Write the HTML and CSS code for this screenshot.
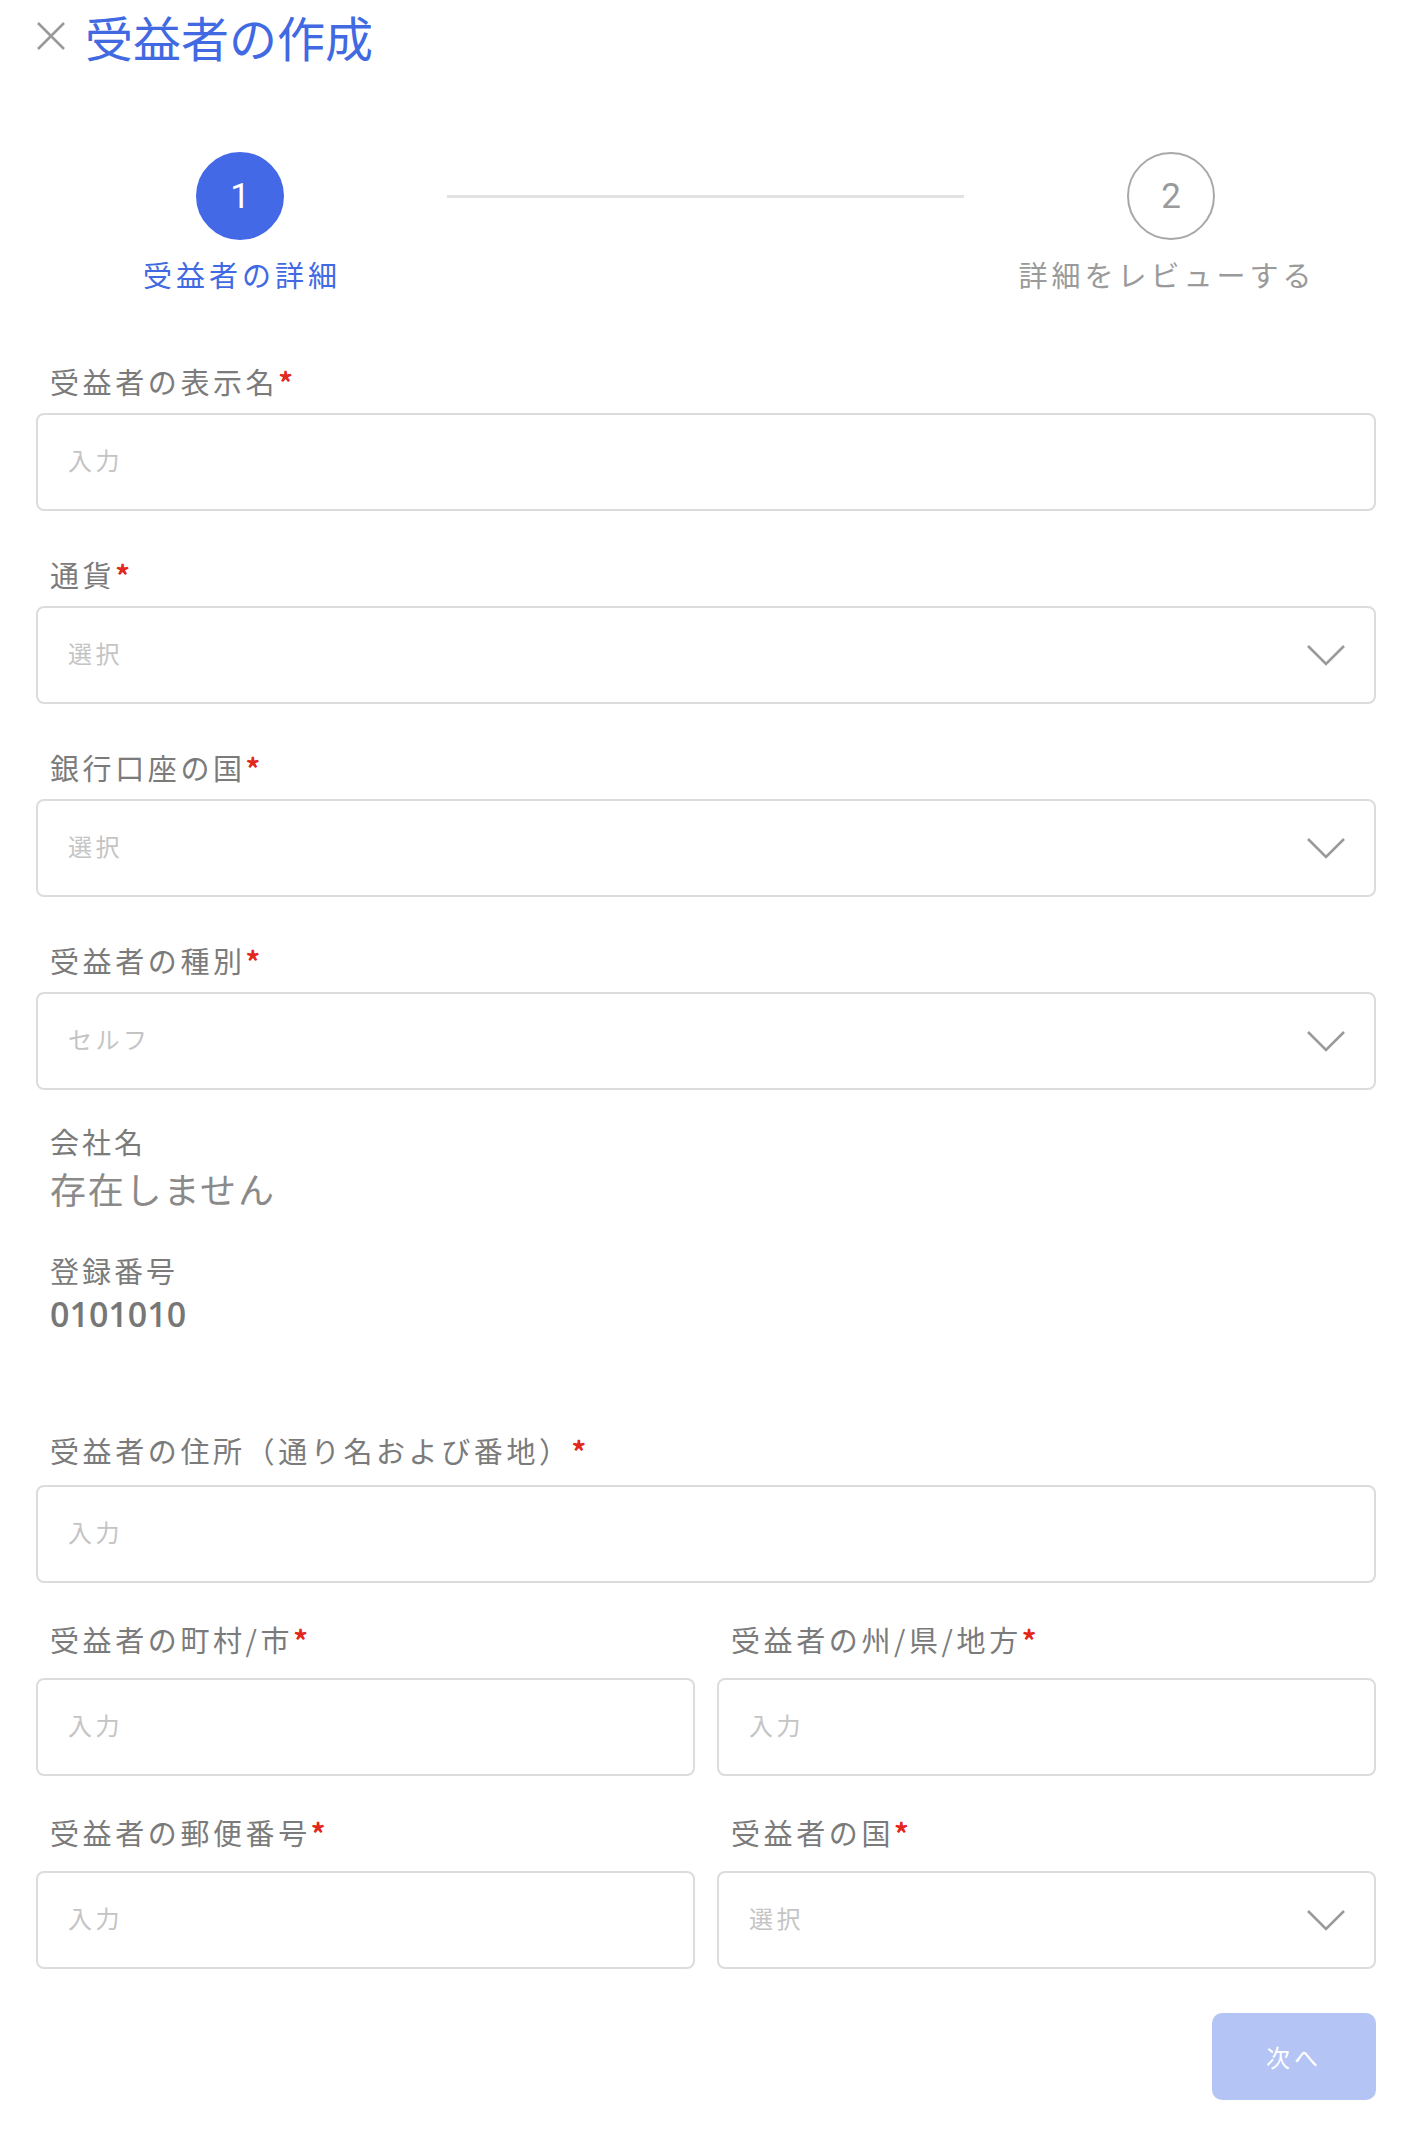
FILE: index.html
```html
<!DOCTYPE html>
<html lang="ja">

<head>
    <meta charset="UTF-8">
    <meta name="viewport" content="width=device-width, initial-scale=1.0">
    <title>受益者の作成</title>
    <link rel="stylesheet" href="styles.css">
</head>

<body>
    <div class="page">
        <header class="header">
            <button class="close" type="button" aria-label="閉じる">
                <svg width="30" height="30" viewBox="0 0 30 30">
                    <path d="M2 2 L28 28 M28 2 L2 28" stroke="#9a9a9a" stroke-width="2.6" fill="none" />
                </svg>
            </button>
            <h1 class="title">受益者の作成</h1>
        </header>

        <div class="stepper">
            <div class="step active">
                <div class="step-circle">1</div>
                <div class="step-label">受益者の詳細</div>
            </div>
            <div class="step-line"></div>
            <div class="step">
                <div class="step-circle">2</div>
                <div class="step-label">詳細をレビューする</div>
            </div>
        </div>

        <form class="form" id="beneficiaryForm">
            <div class="field">
                <label for="display_name">受益者の表示名<span class="req">*</span></label>
                <input class="input" type="text" id="display_name" placeholder="入力">
            </div>

            <div class="field">
                <label>通貨<span class="req">*</span></label>
                <div class="select">
                    <span>選択</span>
                    <svg class="chevron" width="40" height="22" viewBox="0 0 40 22">
                        <polyline points="2,2 20,20 38,2" />
                    </svg>
                </div>
            </div>

            <div class="field">
                <label>銀行口座の国<span class="req">*</span></label>
                <div class="select">
                    <span>選択</span>
                    <svg class="chevron" width="40" height="22" viewBox="0 0 40 22">
                        <polyline points="2,2 20,20 38,2" />
                    </svg>
                </div>
            </div>

            <div class="field">
                <label>受益者の種別<span class="req">*</span></label>
                <div class="select">
                    <span>セルフ</span>
                    <svg class="chevron" width="40" height="22" viewBox="0 0 40 22">
                        <polyline points="2,2 20,20 38,2" />
                    </svg>
                </div>
            </div>

            <div class="info">
                <div class="info-item">
                    <div class="info-label">会社名</div>
                    <div class="info-value">存在しません</div>
                </div>
                <div class="info-item">
                    <div class="info-label">登録番号</div>
                    <div class="info-value number">0101010</div>
                </div>
            </div>

            <div class="field address">
                <label for="street">受益者の住所（通り名および番地）<span class="req">*</span></label>
                <input class="input" type="text" id="street" placeholder="入力">
            </div>

            <div class="row">
                <div class="field">
                    <label for="city">受益者の町村/市<span class="req">*</span></label>
                    <input class="input" type="text" id="city" placeholder="入力">
                </div>
                <div class="field">
                    <label for="state">受益者の州/県/地方<span class="req">*</span></label>
                    <input class="input" type="text" id="state" placeholder="入力">
                </div>
            </div>

            <div class="row">
                <div class="field">
                    <label for="postal">受益者の郵便番号<span class="req">*</span></label>
                    <input class="input" type="text" id="postal" placeholder="入力">
                </div>
                <div class="field">
                    <label>受益者の国<span class="req">*</span></label>
                    <div class="select">
                        <span>選択</span>
                        <svg class="chevron" width="40" height="22" viewBox="0 0 40 22">
                            <polyline points="2,2 20,20 38,2" />
                        </svg>
                    </div>
                </div>
            </div>

            <div class="actions">
                <button class="next" type="submit" disabled>次へ</button>
            </div>
        </form>
    </div>
</body>

</html>
```

FILE: styles.css
```css
body {
    font-family: "Noto Sans CJK JP", "Noto Sans", sans-serif;
    background-color: white;
    margin: 0;
}

.page {
    padding: 0 50px 0 36px;
}

/* header */
.header {
    display: flex;
    align-items: center;
    height: 72px;
}

.close {
    border: none;
    background: none;
    padding: 0;
    width: 30px;
    height: 30px;
    cursor: pointer;
}

.close svg {
    display: block;
}

.title {
    margin: 0 0 0 19px;
    font-size: 48px;
    font-weight: normal;
    line-height: 56px;
    color: #4169e1;
}

/* stepper */
.stepper {
    display: flex;
    align-items: flex-start;
    margin: 80px 0 0 44px;
}

.step {
    width: 320px;
    display: flex;
    flex-direction: column;
    align-items: center;
}

.step-circle {
    width: 88px;
    height: 88px;
    box-sizing: border-box;
    border-radius: 50%;
    border: 2px solid #a8a8a8;
    display: flex;
    justify-content: center;
    align-items: center;
    font-family: Roboto, "Noto Sans", sans-serif;
    font-size: 35px;
    color: #9a9a9a;
}

.step.active .step-circle {
    background-color: #4469e6;
    border-color: #4469e6;
    color: white;
}

.step-label {
    margin-top: 16px;
    font-size: 29px;
    line-height: 36px;
    letter-spacing: 4px;
    padding-left: 4px;
    color: #9a9a9a;
}

.step:last-child .step-label {
    margin-right: 12px;
}

.step.active .step-label {
    color: #4169e1;
}

.step-line {
    width: 517px;
    height: 3px;
    margin: 43px 47px 0 47px;
    background-color: #e2e2e2;
}

/* form */
.form {
    margin-top: 71px;
}

.field {
    margin-top: 45px;
}

.form > .field:first-child {
    margin-top: 0;
}

.field label {
    display: block;
    padding-left: 14px;
    margin-bottom: 14px;
    font-size: 29px;
    line-height: 36px;
    letter-spacing: 3.6px;
    color: #7b7b7b;
}

.req {
    color: #e2281c;
    font-weight: bold;
    letter-spacing: 0;
}

.input,
.select {
    width: 100%;
    height: 98px;
    box-sizing: border-box;
    border: 2px solid #dcdcdc;
    border-radius: 8px;
    padding: 0 30px 6px;
    font-family: "Noto Sans CJK JP", "Noto Sans", sans-serif;
    font-size: 24px;
    letter-spacing: 3.5px;
    color: #555;
    background-color: white;
}

.input::placeholder {
    color: #c4c4c4;
}

.select {
    display: flex;
    justify-content: space-between;
    align-items: center;
    padding: 0 28px 6px 30px;
    color: #c4c4c4;
}

.chevron {
    margin-top: 6px;
    fill: none;
    stroke: #9a9a9a;
    stroke-width: 2.6;
}

/* company details */
.info {
    margin-top: 33px;
}

.info-item + .info-item {
    margin-top: 42px;
}

.info-label {
    padding-left: 14px;
    font-size: 29px;
    line-height: 36px;
    letter-spacing: 3px;
    color: #7b7b7b;
}

.info-value {
    margin-top: 7px;
    padding-left: 14px;
    font-size: 36px;
    line-height: 44px;
    letter-spacing: 1.8px;
    color: #8a8a8a;
}

.info-value.number {
    margin-top: 8px;
    font-family: "Open Sans", "Noto Sans", sans-serif;
    font-size: 34px;
    font-weight: 600;
    line-height: 36px;
    letter-spacing: 0;
    color: #777;
}

.field.address {
    margin-top: 100px;
}

.field.address label {
    margin-bottom: 17px;
}

.row {
    display: grid;
    grid-template-columns: 1fr 1fr;
    column-gap: 22px;
    margin-top: 38px;
}

.row .field {
    margin-top: 0;
}

.row .field label {
    margin-bottom: 21px;
}

/* footer */
.actions {
    display: flex;
    justify-content: flex-end;
    margin-top: 44px;
}

.next {
    width: 164px;
    height: 87px;
    border: none;
    border-radius: 10px;
    background-color: #b4c4f5;
    color: white;
    font-family: "Noto Sans CJK JP", "Noto Sans", sans-serif;
    font-size: 24px;
    letter-spacing: 4px;
    cursor: pointer;
}
```
